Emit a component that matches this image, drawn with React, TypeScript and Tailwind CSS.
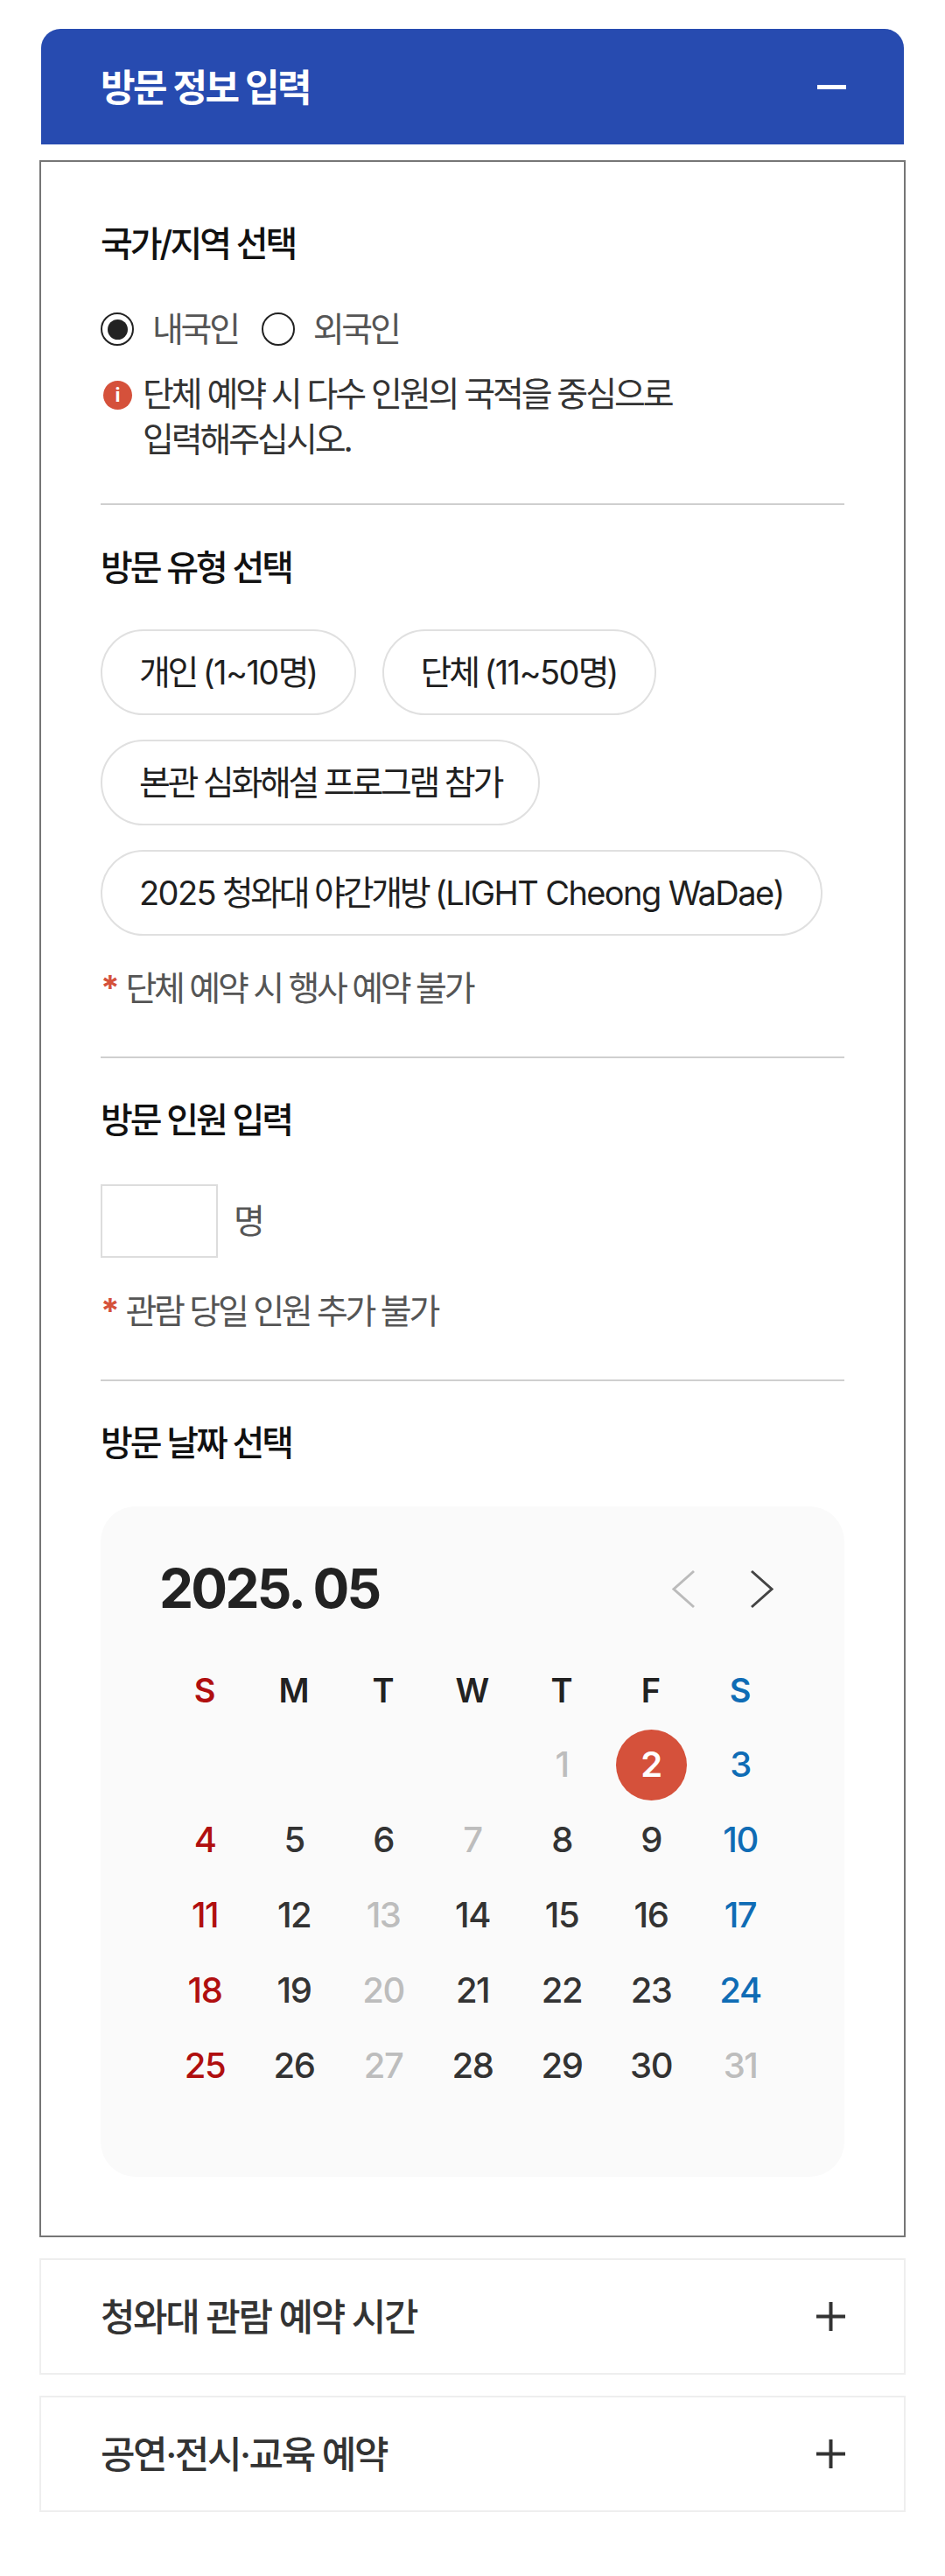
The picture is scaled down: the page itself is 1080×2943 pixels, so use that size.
import React from "react";

const Title = ({ children, className = "" }: { children: React.ReactNode; className?: string }) => (
  <h3 className={`text-[40px] leading-[48px] font-medium tracking-[-3px] text-[#111111] ${className}`}>{children}</h3>
);

const Divider = ({ className }: { className: string }) => <div className={`h-[2px] bg-[#cfcfcf] ${className}`} />;

const Note = ({ children, className }: { children: React.ReactNode; className: string }) => (
  <p className={`text-[39px] leading-[48px] tracking-[-3.3px] text-[#555555] ${className}`}>
    <span className="text-[#d5513b] font-bold mr-[10px]">*</span>
    {children}
  </p>
);

const Pill = ({ children }: { children: React.ReactNode }) => (
  <button className="h-[98px] px-[42px] rounded-full border-2 border-[#e0e0e0] bg-white text-[39px] tracking-[-3.3px] text-[#1f1f1f] whitespace-nowrap">
    {children}
  </button>
);

const Lat = ({ children }: { children: React.ReactNode }) => (
  <span className="text-[38px] tracking-[-1.6px]">{children}</span>
);

const Radio = ({ checked, label }: { checked?: boolean; label: string }) => (
  <label className="flex items-center gap-[21px]">
    <span className="w-[38px] h-[38px] rounded-full border-2 border-[#222222] flex items-center justify-center bg-white">
      {checked && <span className="w-[23px] h-[23px] rounded-full bg-[#222222]" />}
    </span>
    <span className="text-[39px] leading-[48px] tracking-[-3.3px] text-[#555555]">{label}</span>
  </label>
);

const Chevron = ({ dir, color }: { dir: "l" | "r"; color: string }) => (
  <svg width="27" height="45" viewBox="0 0 27 45" fill="none">
    <polyline
      points={dir === "l" ? "25,2 2,22.5 25,43" : "2,2 25,22.5 2,43"}
      stroke={color}
      strokeWidth="3"
    />
  </svg>
);

const weeks: [string, string][][] = [
  [["", ""], ["", ""], ["", ""], ["", ""], ["1", "g"], ["2", "x"], ["3", "b"]],
  [["4", "r"], ["5", "d"], ["6", "d"], ["7", "g"], ["8", "d"], ["9", "d"], ["10", "b"]],
  [["11", "r"], ["12", "d"], ["13", "g"], ["14", "d"], ["15", "d"], ["16", "d"], ["17", "b"]],
  [["18", "r"], ["19", "d"], ["20", "g"], ["21", "d"], ["22", "d"], ["23", "d"], ["24", "b"]],
  [["25", "r"], ["26", "d"], ["27", "g"], ["28", "d"], ["29", "d"], ["30", "d"], ["31", "g"]],
];

const dayColor: Record<string, string> = {
  r: "text-[#b00f0f]",
  b: "text-[#0f6cb5]",
  g: "text-[#bdbdbd]",
  d: "text-[#333333]",
  x: "text-white",
};

const Collapsed = ({ title, className }: { title: string; className: string }) => (
  <div className={`mx-[45px] border-2 border-[#eeeeee] flex items-center justify-between pl-[68px] pr-[67px] ${className}`}>
    <span className="text-[43px] font-medium tracking-[-2.45px] text-[#333333] pt-[1px]">{title}</span>
    <svg width="33" height="33" viewBox="0 0 33 33" fill="none" stroke="#333333" strokeWidth="4">
      <path d="M0 16.5H33M16.5 0V33" />
    </svg>
  </div>
);

export default function App() {
  return (
    <div className="w-[1080px] h-[2943px] bg-white pt-[33px] font-['Inter','Noto_Sans_CJK_KR',sans-serif]">
      <div className="mx-[47px] h-[132px] bg-[#274bb0] rounded-t-[22px] flex items-center justify-between pl-[68px] pr-[66px]">
        <span className="text-[43px] font-semibold tracking-[-2.5px] text-white pt-[2px]">방문 정보 입력</span>
        <span className="w-[33px] h-[5px] bg-white" />
      </div>

      <div className="mx-[45px] mt-[18px] border-2 border-[#767676] px-[68px] pt-[70px] pb-[67px]">
        <Title>국가/지역 선택</Title>
        <div className="flex items-center gap-[27px] mt-[49px]">
          <Radio checked label="내국인" />
          <Radio label="외국인" />
        </div>
        <div className="flex items-start gap-[12px] mt-[24px] pl-[3px]">
          <span className="mt-[11px] w-[33px] h-[33px] rounded-full bg-[#d5513b] text-white text-[22px] leading-[33px] font-bold text-center shrink-0">
            i
          </span>
          <p className="text-[39px] leading-[52px] tracking-[-3.1px] text-[#333333]">
            단체 예약 시 다수 인원의 국적을 중심으로
            <br />
            입력해주십시오.
          </p>
        </div>

        <Divider className="mt-[47px] mb-[48px]" />

        <Title>방문 유형 선택</Title>
        <div className="flex flex-wrap gap-x-[30px] gap-y-[28px] mt-[46px]">
          <Pill>개인 <Lat>(1~10</Lat>명<Lat>)</Lat></Pill>
          <Pill>단체 <Lat>(11~50</Lat>명<Lat>)</Lat></Pill>
          <Pill>본관 심화해설 프로그램 참가</Pill>
          <Pill><Lat>2025</Lat> 청와대 야간개방 <Lat>(LIGHT Cheong WaDae)</Lat></Pill>
        </div>
        <Note className="mt-[36px]">단체 예약 시 행사 예약 불가</Note>

        <Divider className="mt-[54px] mb-[47px]" />

        <Title>방문 인원 입력</Title>
        <div className="flex items-center gap-[18px] mt-[49px]">
          <input className="w-[134px] h-[84px] border-2 border-[#dddddd] bg-white" />
          <span className="text-[39px] tracking-[-3.3px] text-[#555555]">명</span>
        </div>
        <Note className="mt-[37px]">관람 당일 인원 추가 불가</Note>

        <Divider className="mt-[54px] mb-[47px]" />

        <Title>방문 날짜 선택</Title>
        <div className="mt-[48px] bg-[#fafafa] rounded-[40px] pt-[58px] pb-[84px] px-[68px]">
          <div className="flex items-center justify-between">
            <span className="text-[62px] leading-[72px] font-bold tracking-[-2.7px] text-[#222222] -ml-[1px]">2025. 05</span>
            <div className="flex items-center gap-[62px] pr-[13px]">
              <Chevron dir="l" color="#bbbbbb" />
              <Chevron dir="r" color="#444444" />
            </div>
          </div>
          <div className="grid grid-cols-7 mt-[39px] h-[83px] items-center text-center text-[38px] font-semibold">
            {["S", "M", "T", "W", "T", "F", "S"].map((d, i) => (
              <span key={i} className={i === 0 ? "text-[#b00f0f]" : i === 6 ? "text-[#0f6cb5]" : "text-[#222222]"}>
                {d}
              </span>
            ))}
          </div>
          {weeks.map((w, i) => (
            <div key={i} className="grid grid-cols-7 h-[86px] items-center justify-items-center text-[40px] font-medium tracking-[-1.5px]">
              {w.map(([d, c], j) =>
                c === "x" ? (
                  <span key={j} className="w-[81px] h-[81px] rounded-full bg-[#d5513b] text-white font-semibold flex items-center justify-center">
                    {d}
                  </span>
                ) : (
                  <span key={j} className={dayColor[c] ?? ""}>
                    {d}
                  </span>
                )
              )}
            </div>
          ))}
        </div>
      </div>

      <Collapsed title="청와대 관람 예약 시간" className="mt-[24px] h-[133px]" />
      <Collapsed title="공연·전시·교육 예약" className="mt-[24px] h-[133px]" />
    </div>
  );
}
